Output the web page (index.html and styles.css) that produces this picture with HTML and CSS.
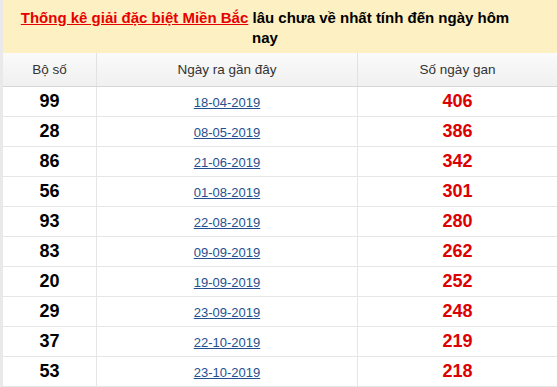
FILE: index.html
```html
<!DOCTYPE html>
<html>
<head>
<meta charset="utf-8">
<link rel="stylesheet" href="styles.css">
</head>
<body>
<div class="wrap">
  <div class="title"><a href="#" class="title-link">Thống kê giải đặc biệt Miền Bắc</a> lâu chưa về nhất tính đến ngày hôm nay</div>
  <table class="gan">
    <thead>
      <tr><th class="c1">Bộ số</th><th class="c2">Ngày ra gần đây</th><th class="c3">Số ngày gan</th></tr>
    </thead>
    <tbody>
      <tr><td class="num">99</td><td><a href="#" class="date">18-04-2019</a></td><td class="days">406</td></tr>
      <tr><td class="num">28</td><td><a href="#" class="date">08-05-2019</a></td><td class="days">386</td></tr>
      <tr><td class="num">86</td><td><a href="#" class="date">21-06-2019</a></td><td class="days">342</td></tr>
      <tr><td class="num">56</td><td><a href="#" class="date">01-08-2019</a></td><td class="days">301</td></tr>
      <tr><td class="num">93</td><td><a href="#" class="date">22-08-2019</a></td><td class="days">280</td></tr>
      <tr><td class="num">83</td><td><a href="#" class="date">09-09-2019</a></td><td class="days">262</td></tr>
      <tr><td class="num">20</td><td><a href="#" class="date">19-09-2019</a></td><td class="days">252</td></tr>
      <tr><td class="num">29</td><td><a href="#" class="date">23-09-2019</a></td><td class="days">248</td></tr>
      <tr><td class="num">37</td><td><a href="#" class="date">22-10-2019</a></td><td class="days">219</td></tr>
      <tr><td class="num">53</td><td><a href="#" class="date">23-10-2019</a></td><td class="days">218</td></tr>
    </tbody>
  </table>
</div>
</body>
</html>
```

FILE: styles.css
```css
html, body {
  margin: 0;
  padding: 0;
  background: #fff;
}
body {
  font-family: "Liberation Sans", Arial, sans-serif;
}
.wrap {
  border-left: 3px solid #e9e9e9;
  width: 554px;
}
.title {
  background: #fdf0c2;
  font-weight: bold;
  font-size: 15px;
  line-height: 20px;
  color: #000;
  text-align: center;
  padding: 8px 38px 5px 8px;
  height: 40px;
}
.title-link {
  color: #e60000;
  text-decoration: underline;
}
.gan {
  width: 100%;
  border-collapse: collapse;
  table-layout: fixed;
}
.gan th {
  height: 33px;
  padding: 0;
  font-weight: normal;
  font-size: 13.5px;
  color: #333;
  background: linear-gradient(#fafafa, #f0f0f0);
  border-bottom: 1px solid #d6d6d6;
  border-left: 1px solid #e2e2e2;
  text-align: center;
}
.gan th:first-child, .gan td:first-child {
  border-left: none;
}
.c1 { width: 93px; }
.c2 { width: 260px; }
.gan td {
  height: 29px;
  padding: 0;
  text-align: center;
  border-bottom: 1px solid #e6e6e6;
  border-left: 1px solid #e6e6e6;
}
.num {
  font-weight: bold;
  font-size: 18px;
  color: #000;
}
.date {
  font-size: 13px;
  color: #25508f;
  text-decoration: underline;
}
.days {
  font-weight: bold;
  font-size: 18px;
  color: #dd0000;
}
```
